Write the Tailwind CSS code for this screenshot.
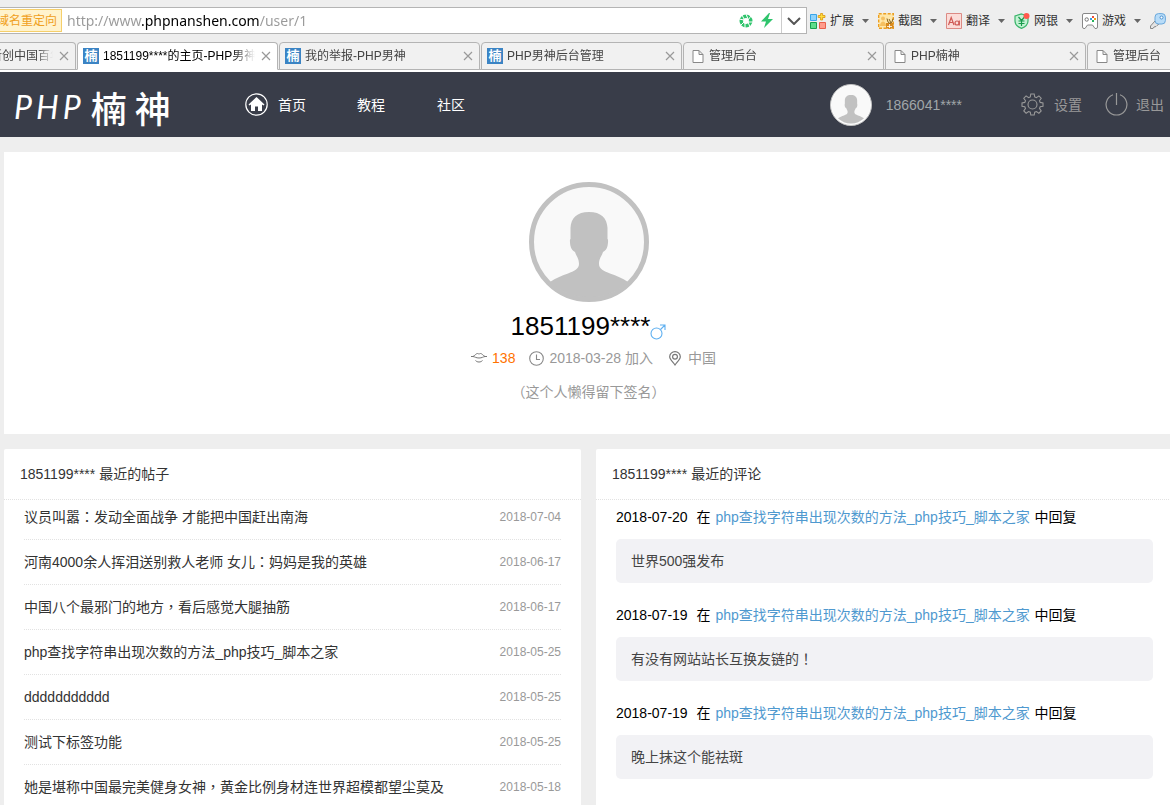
<!DOCTYPE html>
<html lang="zh-CN" class="[scrollbar-width:none]">
<head>
  <meta charset="UTF-8" />
  <meta name="viewport" content="width=device-width, initial-scale=1.0" />
  <title>1851199****的主页-PHP男神</title>
  <script src="https://cdn.jsdelivr.net/npm/@tailwindcss/browser@4"></script>
</head>
<body class="min-h-screen flex flex-col overflow-x-hidden bg-[#eee] text-sm text-[#333] font-['Liberation_Sans','Noto_Sans_CJK_SC',sans-serif]">

  <!-- shared shapes -->
  <svg class="hidden">
    <symbol id="person" viewBox="0 0 120 120">
      <circle cx="60" cy="60" r="58" fill="#f9f9f9" />
      <path fill="#c1c1c1" d="M60 30C48 30 42 36 41.500 46V57C40.500 57 41 62 41.500 64 42 67 44 69 46 70 47 74 50 76 50 82 50 87 45 89 39 91.500 32 94 27 96 21 100A56 56 0 0 0 99 100C93 96 88 94 81 91.500 75 89 70 87 70 82 70 76 73 74 74 70 76 69 78 67 78.500 64 79 62 79.500 57 78.500 57V46C78 36 72 30 60 30z" />
    </symbol>
  </svg>

  <!-- address bar -->
  <div class="flex items-center h-[27px] mt-[7px] shrink-0 whitespace-nowrap text-xs">
    <form class="flex items-center flex-1 h-full bg-white border-y border-r border-[#b4b4b4]" onsubmit="return false">
      <span class="flex items-center justify-end w-[62px] h-[23px] pr-1 overflow-hidden bg-[#fff3cd] border border-l-0 border-[#f5cf6b] text-[#f0a020]">域名重定向</span>
      <input aria-label="地址" value="http://www.phpnanshen.com/user/1" class="flex-1 min-w-0 h-full pl-[5px] outline-none text-[14px] font-['Noto_Sans',sans-serif] text-transparent bg-clip-text bg-[linear-gradient(90deg,#999_79px,#000_79px,#000_197px,#999_197px)]" />
      <svg class="w-3.5 h-3.5 mr-2" viewBox="0 0 14 14" fill="none" stroke="#2fc46c">
        <circle cx="7" cy="7" r="4.700" stroke-width="3.600" />
        <path stroke="#fff" stroke-width="1" d="M7 0l2 5M12 2l-3 4M14 8l-5 0M11 13l-2-5M6 14l0-5M1 12l4-4M0 5l5 1M3 1l2 4" />
      </svg>
      <svg class="w-3 h-[15px] mr-2" viewBox="0 0 12 15"><path fill="#2fc46c" d="M8 0L0 8.500h5L3 15l9-9H7l2-6z" /></svg>
      <button class="flex items-center justify-center w-[25px] h-full border-l border-[#ccc]" aria-label="展开">
        <svg class="w-3.5 h-2" viewBox="0 0 14 8" fill="none" stroke="#555" stroke-width="2"><path d="M1 1l6 6 6-6" /></svg>
      </button>
    </form>

    <div class="flex items-center pl-[3px] text-[#333]">
      <button class="flex items-center w-[68px]">
        <svg class="w-4 h-4 mr-1" viewBox="0 0 16 16">
          <path fill="#8fd3fb" stroke="#3aa5e8" d="M.5 1.500h6v6h-6z" />
          <path fill="#5fdc8c" stroke="#17a04f" d="M.5 9.500h6v6h-6z" />
          <path fill="#ff9c8c" stroke="#e8604c" d="M9.500 9.500h6v6h-6z" />
          <path fill="#ffe03c" stroke="#d9920a" stroke-width=".8" d="M10.600.5h2v2h2.400v2h-2.400v2.500h-2v-2.500h-2.400v-2h2.400z" />
        </svg>
        扩展
        <svg class="w-[7px] h-1 ml-2" viewBox="0 0 7 4"><path fill="#666" d="M0 0h7L3.500 4z" /></svg>
      </button>
      <button class="flex items-center w-[68px]">
        <svg class="w-4 h-4 mr-1" viewBox="0 0 16 16">
          <rect x=".7" y=".7" width="14.600" height="14.600" fill="#ffe7a8" stroke="#eda020" stroke-width="1.400" stroke-dasharray="3 1.500" />
          <circle cx="5" cy="5.500" r="2" fill="#f5c060" />
          <path fill="#f5c060" d="M2 13c0-6 6-6 6 0z" />
          <path fill="#d88a1c" d="M8 10h7.500v5.500H8z" />
          <path fill="none" stroke="#8a6420" d="M9 5.500l1 3.500 2 1.500 2-1.500 1-3.500M11 6l2 4" />
          <path fill="none" stroke="#fff" stroke-width=".8" d="M9 13.500h5M11.500 11v4" />
        </svg>
        截图
        <svg class="w-[7px] h-1 ml-2" viewBox="0 0 7 4"><path fill="#666" d="M0 0h7L3.500 4z" /></svg>
      </button>
      <button class="flex items-center w-[68px]">
        <svg class="w-4 h-4 mr-1" viewBox="0 0 16 16">
          <path fill="#fbdcd8" stroke="#dc8a84" d="M.5.5h15v15H.5z" />
          <path fill="none" stroke="#cf5a55" stroke-width="1.200" d="M2.500 12l2.700-7.500L8 12M3.500 9.500h3.600" />
          <circle cx="11" cy="10" r="2" fill="none" stroke="#cf5a55" stroke-width="1.200" />
          <path stroke="#cf5a55" stroke-width="1.200" d="M13.300 7.500v5" />
        </svg>
        翻译
        <svg class="w-[7px] h-1 ml-2" viewBox="0 0 7 4"><path fill="#666" d="M0 0h7L3.500 4z" /></svg>
      </button>
      <button class="flex items-center w-[68px]">
        <svg class="w-4 h-4 mr-1" viewBox="0 0 16 16">
          <path fill="#c4f2d4" stroke="#3bb56b" stroke-width="1.200" d="M7.500 1l6.500 2v5c0 4-3 6-6.500 7.400C4 14 1 12 1 8V3z" />
          <path fill="none" stroke="#199a4c" stroke-width="1.200" d="M4.500 4l3 3.500 3-3.500M7.500 7v6M4.500 8h6M4.500 10.500h6" />
          <circle cx="12.500" cy="3" r="3" fill="#ff5a4c" />
        </svg>
        网银
        <svg class="w-[7px] h-1 ml-2" viewBox="0 0 7 4"><path fill="#666" d="M0 0h7L3.500 4z" /></svg>
      </button>
      <button class="flex items-center w-[68px]">
        <svg class="w-4 h-4 mr-1" viewBox="0 0 16 16">
          <path fill="#fff" stroke="#888" d="M2 .5h12q1.500 0 1.500 1.500v12q0 1.500-1.500 1.500h-1L10.500 12h-5L3 15.500H2Q.5 15.500.5 14V2Q.5.5 2 .5z" />
          <circle cx="4.700" cy="6.500" r="1.700" fill="none" stroke="#777" />
          <path fill="#e84c3c" d="M10 3h2v2h-2z" /><path fill="#2f9be8" d="M8 5h2v2H8z" />
          <path fill="#f0a010" d="M12 5h2v2h-2z" /><path fill="#25b35c" d="M10 7h2v2h-2z" />
        </svg>
        游戏
        <svg class="w-[7px] h-1 ml-2" viewBox="0 0 7 4"><path fill="#666" d="M0 0h7L3.500 4z" /></svg>
      </button>
      <button class="pr-1" aria-label="登录管家">
        <svg class="w-4 h-4" viewBox="0 0 16 16">
          <path fill="#e4e4e4" stroke="#888" d="M5 8l4 3-2 1.500-1 1-2 .5-1 1.500H.5V13z" />
          <rect x="5" y=".6" width="10.400" height="10.400" rx="3.500" fill="#b8dcf8" stroke="#6aa8dc" />
          <circle cx="11.500" cy="4.500" r="1.500" fill="#fff" stroke="#4a90d0" />
        </svg>
      </button>
    </div>
  </div>

  <!-- browser tabs -->
  <div id="tabs" class="flex h-[30px] mt-2 shrink-0 overflow-hidden bg-[linear-gradient(#eee_27px,#b4b4b4_27px,#b4b4b4_28px,#fff_28px)] text-xs"></div>

  <!-- site header -->
  <header class="flex items-center justify-between h-[65px] pr-1.5 shrink-0 bg-[#393d49] whitespace-nowrap">
    <div class="flex items-center">
      <a href="#" class="flex items-center w-[230px] pl-3.5 pt-1 gap-2.5 text-white text-[36px] leading-10 font-['Noto_Sans_CJK_SC',sans-serif]" aria-label="PHP楠神">
        <span class="flex gap-1 italic text-[32px] font-['Lato',sans-serif]"><span>P</span><span>H</span><span>P</span></span>
        <span class="flex gap-2 font-medium"><span>楠</span><span>神</span></span>
      </a>
      <nav class="flex items-center pl-[15px] text-white">
        <a href="#" class="flex items-center gap-2.5">
          <svg class="w-[23px] h-[23px]" viewBox="0 0 23 23">
            <circle cx="11.500" cy="11.500" r="10.700" fill="none" stroke="#fff" stroke-width="1.200" />
            <path fill="#fff" d="M11.500 4l8 7.500-1 1-1.500-1V18h-4v-4.500h-3V18H6v-6.500l-1.500 1-1-1z" />
          </svg>
          首页
        </a>
        <a href="#" class="ml-[51px]">教程</a>
        <a href="#" class="ml-[52px]">社区</a>
      </nav>
    </div>
    <div class="flex items-center text-[#999]">
      <a href="#" class="flex items-center gap-3.5 text-[#a0a6a8]">
        <svg class="w-[42px] h-[42px] rounded-full border border-[#c2c2c2] bg-white"><use href="#person" /></svg>
        1866041****
      </a>
      <a href="#" class="flex items-center gap-2.5 ml-[59px]">
        <svg class="w-[23px] h-[23px]" viewBox="0 0 23 23" fill="none" stroke="#999" stroke-width="1.100">
          <circle cx="11.500" cy="11.500" r="4.500" />
          <path d="M9.800 1h3.400l.5 2.900 1.700.7 2.500-1.700 2.300 2.300-1.700 2.500.7 1.700 2.800.5v3.300l-2.800.5-.7 1.700 1.700 2.500-2.300 2.300-2.500-1.700-1.700.7-.5 2.800H9.800l-.5-2.800-1.700-.7-2.500 1.700-2.300-2.300 1.700-2.500-.7-1.700-2.800-.5V9.900l2.800-.5.7-1.700-1.700-2.500 2.300-2.300 2.500 1.700 1.700-.7z" />
        </svg>
        设置
      </a>
      <a href="#" class="flex items-center gap-2 ml-[23px]">
        <svg class="w-[23px] h-[23px]" viewBox="0 0 23 23" fill="none" stroke="#999" stroke-width="1.200">
          <path d="M8 1.800a10.400 10.400 0 1 0 7 0M11.500 0v12" />
        </svg>
        退出
      </a>
    </div>
  </header>

  <!-- the page grid starts 4px in and runs past the right edge -->
  <main class="flex-1 flex flex-col gap-[15px] ml-1 -mr-[3px] mt-[15px]">
    <section class="flex flex-col items-center h-[282px] pt-[30px] bg-white text-[#999]">
      <svg class="w-[120px] h-[120px] shrink-0" viewBox="0 0 120 120">
        <use href="#person" />
        <circle cx="60" cy="60" r="57.500" fill="none" stroke="#c1c1c1" stroke-width="5" />
      </svg>
      <h1 class="flex items-end mt-2 text-[26px] leading-8 text-black">
        1851199****
        <svg class="w-4 h-4 mb-0.5" viewBox="0 0 16 16" fill="none" stroke="#5fb0f0" stroke-width="1.100">
          <circle cx="6.500" cy="9.500" r="5.500" /><path d="M10.500 5.500l4.500-4.500M10 1h5v5" />
        </svg>
      </h1>
      <p class="flex items-center mt-1 pl-2.5 leading-6">
        <svg class="w-4 h-3 mr-[5px]" viewBox="0 0 16 12" fill="none" stroke="#777">
          <path d="M0 4.500h2c2-1 3-3 4.500-3 1 0 1 .5 1.500.5s.5-.5 1.500-.5c1.500 0 2.500 2 4.500 3h2M2 4.500c2 .3 3 1.500 6 1.500s4-1.200 6-1.500M4.500 8.500c1 1 2 1.500 3.500 1.500s2.500-.5 3.500-1.500" />
        </svg>
        <span class="text-[#ff7200]">138</span>
        <svg class="w-[15px] h-[15px] ml-3.5 mr-[5px]" viewBox="0 0 15 15" fill="none" stroke="#888" stroke-width="1.100">
          <circle cx="7.500" cy="7.500" r="6.800" /><path d="M7.500 3.500v5h3.500" />
        </svg>
        2018-03-28 加入
        <svg class="w-3 h-[15px] ml-4 mr-[7px]" viewBox="0 0 12 15" fill="none" stroke="#777" stroke-width="1.200">
          <path d="M6 14C4 11 .7 8.500.7 5.700a5.300 5.100 0 0 1 10.600 0C11.300 8.500 8 11 6 14z" /><circle cx="6" cy="5.700" r="2.400" />
        </svg>
        中国
      </p>
      <p class="mt-2.5 leading-6">（这个人懒得留下签名）</p>
    </section>

    <div class="flex-1 grid grid-cols-2 gap-[15px]">
      <section class="bg-white rounded-t-xs">
        <h2 class="h-[51px] px-4 leading-[50px] border-b border-dotted border-[#e2e2e2]">1851199**** 最近的帖子</h2>
        <ul id="posts" class="px-5 -mt-[5px]"></ul>
      </section>
      <section class="bg-white rounded-t-xs">
        <h2 class="h-[51px] px-4 leading-[50px] border-b border-dotted border-[#e2e2e2]">1851199**** 最近的评论</h2>
        <ul id="comments" class="px-5 -mt-[5px]"></ul>
      </section>
    </div>
  </main>

  <script>
    const tabs = [
      { title: '1851199****的主页-PHP男神', icon: 'site', active: true },
      { title: '我的举报-PHP男神', icon: 'site' },
      { title: 'PHP男神后台管理', icon: 'site' },
      { title: '管理后台', icon: 'page' },
      { title: 'PHP楠神', icon: 'page' },
      { title: '管理后台', icon: 'page' },
    ];

    const posts = [
      ['议员叫嚣：发动全面战争 才能把中国赶出南海', '2018-07-04'],
      ['河南4000余人挥泪送别救人老师 女儿：妈妈是我的英雄', '2018-06-17'],
      ['中国八个最邪门的地方，看后感觉大腿抽筋', '2018-06-17'],
      ['php查找字符串出现次数的方法_php技巧_脚本之家', '2018-05-25'],
      ['ddddddddddd', '2018-05-25'],
      ['测试下标签功能', '2018-05-25'],
      ['她是堪称中国最完美健身女神，黄金比例身材连世界超模都望尘莫及', '2018-05-18'],
    ];

    const comments = [
      ['2018-07-20', '世界500强发布'],
      ['2018-07-19', '有没有网站站长互换友链的！'],
      ['2018-07-19', '晚上抹这个能祛斑'],
    ];

    // the TC font centres full-width punctuation in its cell
    const punctuate = (text) =>
      text.replace(/[：，！]/g, `<span lang="zh-TW" class="leading-none font-['Noto_Sans_CJK_TC',sans-serif]">$&</span>`);

    const icons = {
      site: '<span class="flex items-center justify-center w-4 h-4 mr-1 shrink-0 bg-[#3b84c4] text-white text-[13px] font-bold leading-4">楠</span>',
      page: '<svg class="w-3 h-[13px] ml-[3px] mr-[5px] shrink-0" viewBox="0 0 12 13" fill="#fff" stroke="#888"><path d="M1 .5h6l4 4v8H1zM7 .5v4h4" /></svg>',
    };

    const closeButton = `
      <button class="w-2.5 h-2.5 ml-1.5 shrink-0" aria-label="关闭">
        <svg class="w-2.5 h-2.5" viewBox="0 0 10 10" stroke="#999" stroke-width="1.200"><path d="M1 1l8 8M9 1l-8 8" /></svg>
      </button>`;

    const tabBar = document.getElementById('tabs');
    tabBar.innerHTML = `
      <div class="flex items-center w-[76px] h-7 mr-px pr-1.5 shrink-0 border border-l-0 border-[#b4b4b4] rounded-tr bg-[#f1f1f1] text-[#444]">
        <div class="flex-1 overflow-hidden whitespace-nowrap [mask-image:linear-gradient(90deg,#000_70%,transparent)]"><a href="#" class="-ml-2.5">新创中国百年</a></div>
        ${closeButton}
      </div>`;
    tabs.forEach(tab => {
      const el = document.createElement('div');
      el.className = 'flex items-center w-[201px] h-7 mr-px pl-[5px] pr-1.5 shrink-0 border border-[#b4b4b4] rounded-t ' +
        (tab.active ? 'border-b-white bg-white text-black' : 'bg-[#f1f1f1] text-[#444]');
      el.innerHTML = `
        ${icons[tab.icon]}
        <a href="#" class="flex-1 overflow-hidden whitespace-nowrap [mask-image:linear-gradient(90deg,#000_85%,transparent)]">${tab.title}</a>
        ${closeButton}
      `;
      tabBar.appendChild(el);
    });

    const postList = document.getElementById('posts');
    posts.forEach(([title, date]) => {
      const el = document.createElement('li');
      el.className = 'flex justify-between h-[45px] leading-[44px] border-b border-dotted border-[#e2e2e2] whitespace-nowrap';
      el.innerHTML = `<a href="#" class="truncate">${punctuate(title)}</a><span class="text-xs leading-[44px] text-[#999]">${date}</span>`;
      postList.appendChild(el);
    });

    const commentList = document.getElementById('comments');
    comments.forEach(([date, text]) => {
      const el = document.createElement('li');
      el.className = 'mb-2.5 leading-[44px]';
      el.innerHTML = `
        <p class="text-black"><span class="mr-[5px]">${date}</span> 在 <a href="#" class="mx-px text-[#4f99cf]">php查找字符串出现次数的方法_php技巧_脚本之家</a> 中回复</p>
        <div class="h-11 px-[15px] rounded-[5px] bg-[#f2f2f5] text-[#444]">${punctuate(text)}</div>
      `;
      commentList.appendChild(el);
    });
  </script>
</body>
</html>
